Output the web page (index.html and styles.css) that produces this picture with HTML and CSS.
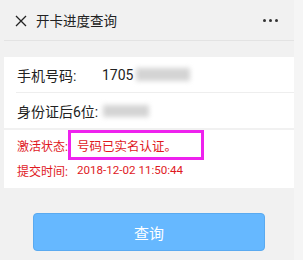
FILE: index.html
```html
<!DOCTYPE html>
<html lang="zh">
<head>
<meta charset="utf-8">
<link rel="stylesheet" href="styles.css">
</head>
<body>
<div class="col">
  <header class="bar">
    <svg class="close" width="12" height="12" viewBox="0 0 12 12"><path d="M1 1L11 11M11 1L1 11" stroke="#222" stroke-width="1.3" fill="none"/></svg>
    <span class="title">开卡进度查询</span>
    <span class="more"><i></i><i></i><i></i></span>
  </header>
  <section class="panel first">
    <div class="row sep"><span class="lbl">手机号码:</span><span class="val">1705<span class="blur b1"></span></span></div>
    <div class="row"><span class="lbl">身份证后6位:</span><span class="blur b2"></span></div>
  </section>
  <section class="panel second">
    <div class="red r1"><span class="rl">激活状态:</span><span class="status">号码已实名认证。</span></div>
    <div class="red r2"><span class="rl">提交时间:</span><span class="date">2018-12-02 11:50:44</span></div>
  </section>
  <div class="btnwrap"><button class="btn">查询</button></div>
</div>
</body>
</html>
```
FILE: styles.css
```css
html, body { margin: 0; padding: 0; }
body {
  background: #f5f5f5;
  font-family: Roboto, "Noto Sans CJK SC", sans-serif;
  width: 303px;
  height: 260px;
  overflow: hidden;
}
.col {
  width: 294px;
  height: 260px;
  background: #f1f1f1;
}
.bar {
  margin-left: 4px;
  height: 40px;
  border-bottom: 1px solid #e3e3e3;
  display: flex;
  align-items: center;
  box-sizing: border-box;
  height: 41px;
}
.close { margin-left: 11px; margin-top: 1px; }
.title {
  margin-left: 9px;
  font-size: 13.5px;
  color: #222;
  flex: 1;
}
.more { display: flex; gap: 3px; margin-right: 16px; }
.more i { width: 3px; height: 3px; border-radius: 50%; background: #333; display: block; }
.panel { background: #fff; margin-left: 4px; }
.first { margin-top: 16px; }
.row {
  height: 35px;
  display: flex;
  align-items: center;
  padding-left: 13px;
  font-size: 14px;
  color: #222;
}
.row.sep { border-bottom: 1px solid #eeeeee; margin-left: 12px; padding-left: 1px; height: 35px; }
.row + .row { height: 35px; }
.lbl { display: inline-block; }
.row.sep .lbl { width: 85px; }
.val { display: flex; align-items: center; }
.blur { display: inline-block; background: #d4d4d4; filter: blur(2.5px); }
.b1 { width: 54px; height: 13px; margin-left: 3px; }
.b2 { width: 46px; height: 12px; margin-left: 5px; }
.second { margin-top: 2px; height: 58px; position: relative; }
.red { color: #e0191e; font-size: 12px; display: flex; align-items: center; padding-left: 13px; }
.r1 { height: 30px; }
.r2 { height: 20px; margin-top: 0; }
.rl { width: 51px; }
.status {
  box-sizing: border-box;
  height: 30px;
  width: 136px;
  border: 3px solid #ee22ee;
  display: flex;
  align-items: center;
  padding-left: 6px;
  font-size: 12.5px;
}
.date { margin-left: 9px; font-size: 11.6px; }
.btnwrap { padding-top: 25px; display: flex; padding-left: 33px; }
.btn {
  width: 232px;
  height: 38px;
  background: #66b8ff;
  border: 1px solid #5aaaf0;
  border-radius: 4px;
  color: #fff;
  font-family: "Noto Sans CJK SC", sans-serif;
  font-size: 15px;
  padding: 0;
}
```
